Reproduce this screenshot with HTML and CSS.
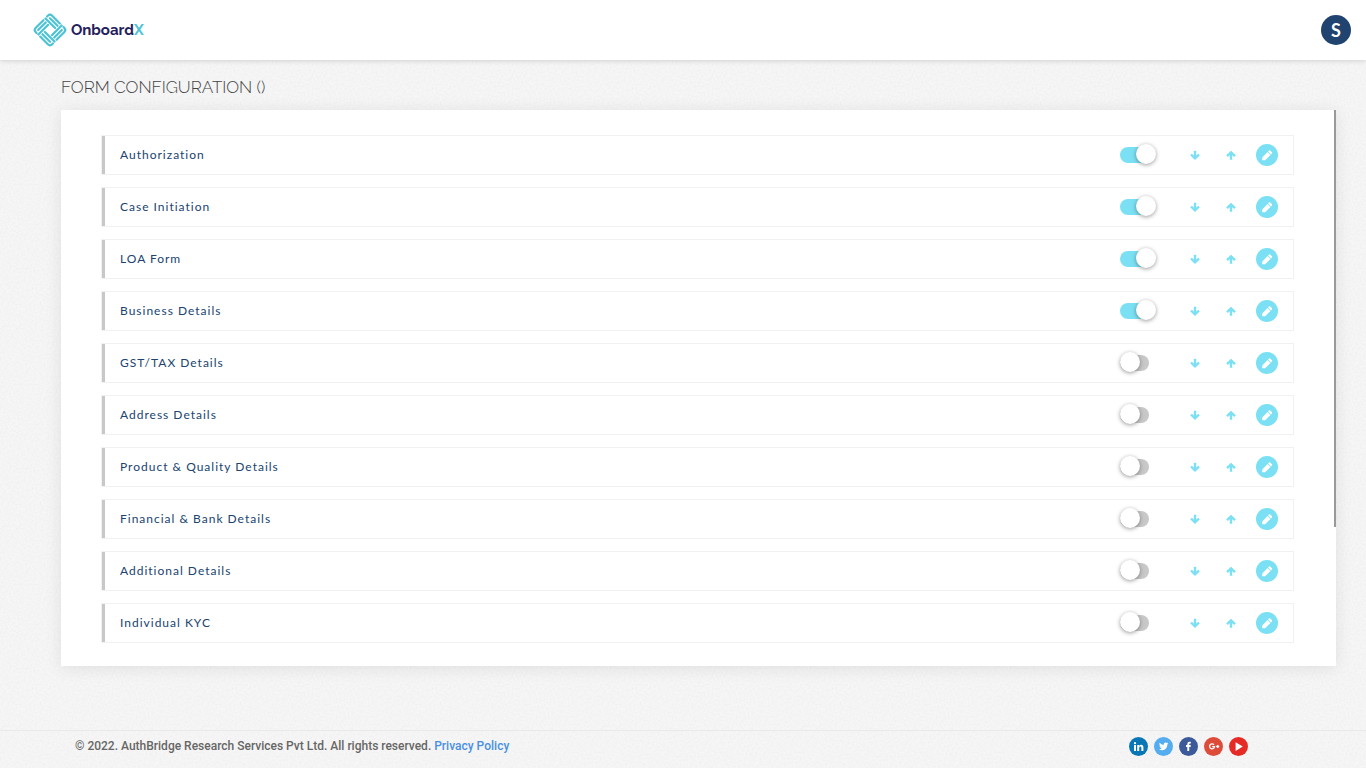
FILE: index.html
```html
<!DOCTYPE html>
<html lang="en">
<head>
<meta charset="utf-8">
<meta name="viewport" content="width=device-width, initial-scale=1">
<title>OnboardX - Form Configuration</title>
<link rel="stylesheet" href="styles.css">
</head>
<body>
<svg class="sprite" aria-hidden="true">
  <symbol id="down" viewBox="0 0 10 10"><path d="M5 .8v7M1 4.500 5 8.300l4-3.800" fill="none" stroke="currentColor" stroke-width="2.400"/></symbol>
  <symbol id="up" viewBox="0 0 10 10"><path d="M5 9.800v-7M1 6.100 5 2.300l4 3.800" fill="none" stroke="currentColor" stroke-width="2.400"/></symbol>
  <symbol id="pencil" viewBox="0 0 12 12"><path d="M1.200 11.300V8.400L6.600 3l2.900 2.900-5.400 5.400zM7.100 2.500l.9-.9q.6-.5 1.200 0l1.700 1.700q.5.600 0 1.200l-.9.900z" fill="currentColor"/></symbol>
</svg>
<header class="topbar">
  <a class="brand" href="#" aria-label="OnboardX">
    <svg class="brand-mark" viewBox="0 0 34 34" aria-hidden="true">
      <g transform="rotate(-45 17 17)" fill="none" stroke="#4cc3d5" stroke-width="2.200" stroke-linecap="round" stroke-linejoin="round">
        <path id="q" d="M5.400 9.500V8.500Q5.400 5.400 8.500 5.400H19.300M8.600 8.700H19.300M5.600 12H19.300"/>
        <use href="#q" transform="rotate(90 17 17)"/>
        <use href="#q" transform="rotate(180 17 17)"/>
        <use href="#q" transform="rotate(270 17 17)"/>
      </g>
    </svg>
    <span class="brand-name">Onboard<span class="brand-x">X</span></span>
  </a>
  <button class="avatar" type="button">S</button>
</header>
<main class="main">
  <h1 class="title">FORM CONFIGURATION ()</h1>
  <section class="card">
    <ul class="rows" id="rows"></ul>
    <div class="scroll-thumb"></div>
  </section>
</main>
<footer class="footer">
  <p class="legal">© 2022. AuthBridge Research Services Pvt Ltd. All rights reserved. <a class="policy" href="#">Privacy Policy</a></p>
  <nav class="social" aria-label="Social">
    <a class="soc linkedin" href="#" aria-label="LinkedIn"><svg viewBox="0 0 19 19"><path fill="#fff" d="M5 8h2v6H5zM8.200 8h1.900v.9q.6-1.100 2-1.100 2.300 0 2.300 2.700V14h-2v-3.200q0-1.300-1-1.300-1.200 0-1.200 1.400V14h-2z"/><circle cx="6" cy="6.200" r="1.100" fill="#fff"/></svg></a>
    <a class="soc twitter" href="#" aria-label="Twitter"><svg viewBox="0 0 19 19"><path fill="#fff" d="M14.500 6.300q-.5.200-1.100.3.600-.4.800-1-.6.300-1.200.5a1.950 1.950 0 0 0-3.300 1.800Q7.200 7.800 5.600 5.800q-.8 1.600.6 2.600-.5 0-.9-.2 0 1.400 1.600 1.900-.4.100-.9 0 .4 1.300 1.800 1.400-1.200.9-2.800.8 1.600 1 3.400.9 4.500-.3 5.100-5.900.600-.4 1-1z"/></svg></a>
    <a class="soc facebook" href="#" aria-label="Facebook"><svg viewBox="0 0 19 19"><path fill="#fff" d="M8.300 14V10H7V8.100h1.300V7q0-2.300 2.200-2.300h1.300v1.700h-.9q-.7 0-.7.800v.9h1.600L11.600 10h-1.400v4z"/></svg></a>
    <a class="soc google" href="#" aria-label="Google Plus"><svg viewBox="0 0 19 19"><path fill="none" stroke="#fff" stroke-width="1.300" d="M10 7.700a2.500 2.500 0 1 0 .6 2H8.200M12.200 9.500h3M13.700 8v3"/></svg></a>
    <a class="soc youtube" href="#" aria-label="YouTube"><svg viewBox="0 0 19 19"><path fill="#fff" d="M6.600 5.200v8.800l7.200-4.400z"/></svg></a>
  </nav>
</footer>
<script src="script.js"></script>
</body>
</html>
```
FILE: styles.css
```css
* { box-sizing: border-box; }
body {
  margin: 0;
  min-height: 100vh;
  display: flex;
  flex-direction: column;
  font-family: Lato, "Liberation Sans", sans-serif;
  background-color: #f6f6f6;
  background-image: url("data:image/svg+xml,%3Csvg xmlns='http://www.w3.org/2000/svg' width='200' height='200'%3E%3Cfilter id='n'%3E%3CfeTurbulence type='fractalNoise' baseFrequency='.5' numOctaves='2' stitchTiles='stitch'/%3E%3CfeColorMatrix values='0 0 0 0 .5 0 0 0 0 .5 0 0 0 0 .5 .24 0 0 0 -.09'/%3E%3C/filter%3E%3Crect width='200' height='200' filter='url(%23n)'/%3E%3C/svg%3E");
}
button { font: inherit; border: 0; padding: 0; background: none; cursor: pointer; }
.sprite { display: none; }
.topbar {
  height: 60px;
  padding: 0 15px 0 33px;
  display: flex;
  align-items: center;
  justify-content: space-between;
  background: #fff;
  box-shadow: 0 1px 5px rgba(0, 0, 0, .15);
}
.brand { display: flex; align-items: center; gap: 4px; text-decoration: none; }
.brand-mark { width: 34px; height: 34px; }
.brand-name { font: 700 15px/20px Raleway, Inter, sans-serif; color: #23205c; }
.brand-x { color: #4cc3d5; }
.avatar {
  width: 30px;
  height: 30px;
  border-radius: 50%;
  background: #20436f;
  color: #fff;
  font-size: 18px;
  font-weight: 700;
}
.main { flex: 1; padding: 16px 30px 0 61px; }
.title {
  margin: 0 0 12px;
  font: 300 17px/22px Raleway, Lato, sans-serif;
  color: #444;
}
.card {
  position: relative;
  padding: 25px 42px 23px 40px;
  background: #fff;
  box-shadow: 0 2px 16px rgba(0, 0, 0, .09);
}
.scroll-thumb {
  position: absolute;
  top: 0;
  right: 0;
  width: 2px;
  height: 75%;
  background: #999;
}
.rows { margin: 0; padding: 0; list-style: none; display: grid; gap: 12px; }
.row {
  height: 40px;
  display: flex;
  align-items: stretch;
  border: 1px solid #f1f1f1;
}
.row-body {
  flex: 1;
  display: flex;
  align-items: center;
  gap: 14px;
  padding: 0 15px;
  border-left: 3px solid #c8c8c8;
}
.row-label {
  flex: 1;
  font-size: 12px;
  line-height: 18px;
  letter-spacing: 1px;
  color: #20436f;
}
.toggle {
  appearance: none;
  position: relative;
  width: 29px;
  height: 16px;
  margin: 0 21px 0 0;
  border-radius: 8px;
  background: #c8c8c8;
  cursor: pointer;
}
.toggle::before {
  content: "";
  position: absolute;
  top: -3px;
  left: 0;
  width: 20px;
  height: 20px;
  border-radius: 50%;
  background: #fff;
  box-shadow: 0 1px 4px rgba(0, 0, 0, .4);
}
.toggle:checked { background: #7be0f3; }
.toggle:checked::before { left: 16px; }
.icon-btn {
  width: 22px;
  height: 22px;
  display: grid;
  place-items: center;
  color: #7be0f3;
}
.icon-btn svg { width: 10px; height: 10px; }
.edit { border-radius: 50%; background: #7be0f3; color: #fff; }
.icon-btn.edit svg { width: 12px; height: 12px; }
.footer {
  display: flex;
  justify-content: space-between;
  align-items: flex-start;
  padding: 6px 118px 12px 75px;
  border-top: 1px solid #e9e9e9;
}
.legal { margin: 0; font: 500 12px/18px Roboto, sans-serif; color: #666; }
.policy { color: #4a90e2; text-decoration: none; }
.social { display: flex; gap: 6px; }
.soc { width: 19px; height: 19px; border-radius: 50%; }
.soc svg { display: block; }
.linkedin { background: #0977b6; }
.twitter { background: #55acee; }
.facebook { background: #3c5a99; }
.google { background: #dd4b39; }
.youtube { background: #e62b27; }
```
FILE: script.js
```js
const forms = [
  ["Authorization", true],
  ["Case Initiation", true],
  ["LOA Form", true],
  ["Business Details", true],
  ["GST/TAX Details", false],
  ["Address Details", false],
  ["Product &amp; Quality Details", false],
  ["Financial &amp; Bank Details", false],
  ["Additional Details", false],
  ["Individual KYC", false]
];
document.getElementById("rows").innerHTML = forms.map(([name, on], i) => `
  <li class="row"><div class="row-body">
    <label class="row-label" for="form-${i}">${name}</label>
    <input class="toggle" type="checkbox" id="form-${i}"${on ? " checked" : ""}>
    <button class="icon-btn" type="button" aria-label="Move down"><svg><use href="#down"/></svg></button>
    <button class="icon-btn" type="button" aria-label="Move up"><svg><use href="#up"/></svg></button>
    <button class="icon-btn edit" type="button" aria-label="Edit"><svg><use href="#pencil"/></svg></button>
  </div></li>`).join("");
```
